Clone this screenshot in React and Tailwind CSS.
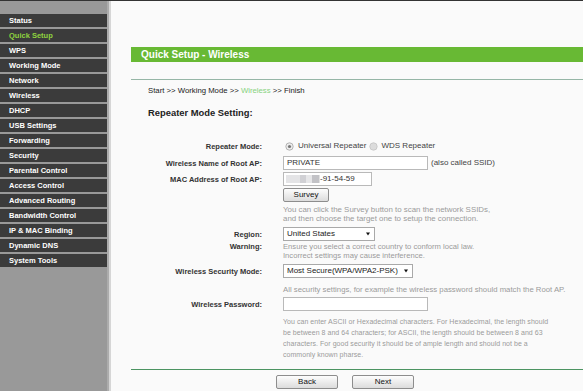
import React from "react";

const menu = [
  "Status",
  "Quick Setup",
  "WPS",
  "Working Mode",
  "Network",
  "Wireless",
  "DHCP",
  "USB Settings",
  "Forwarding",
  "Security",
  "Parental Control",
  "Access Control",
  "Advanced Routing",
  "Bandwidth Control",
  "IP & MAC Binding",
  "Dynamic DNS",
  "System Tools",
];

const Row = ({ label, children, className = "", top = false }) => (
  <div className={`flex ${top ? "items-start" : "items-center"} ${className}`}>
    <div className="w-[131px] shrink-0 text-right text-[7.5px] font-bold leading-[9px] text-[#333]">
      {label}
    </div>
    <div className="ml-[21px] flex items-center">{children}</div>
  </div>
);

const Radio = ({ checked }) => (
  <svg width="9" height="9" viewBox="0 0 9 9" className="shrink-0">
    <circle cx="4.5" cy="4.5" r="3.7" fill={checked ? "#ececec" : "#dcdcdc"} stroke={checked ? "#a5a5a5" : "#c4c4c4"} strokeWidth="0.8" />
    {checked && <circle cx="4.5" cy="4.5" r="1.6" fill="#777" />}
  </svg>
);

const Arrow = () => (
  <svg width="4" height="4" viewBox="0 0 4 4" className="shrink-0">
    <polygon points="0,0.5 4,0.5 2,3.5" fill="#111" />
  </svg>
);

const Button = ({ children, className = "" }) => (
  <div
    className={`flex h-[14px] items-center justify-center rounded-[2px] border border-[#8d8d8d] bg-gradient-to-b from-[#fdfdfd] to-[#dcdcdc] text-[8px] text-[#111] ${className}`}
  >
    {children}
  </div>
);

// grey hint text under the fields
const Help = ({ lines, className = "" }) => (
  <div className={`pl-[152px] text-[#9a9a9a] ${className}`}>
    {lines.map((l) => (
      <div key={l} className="whitespace-nowrap">
        {l}
      </div>
    ))}
  </div>
);

export default function App() {
  return (
    <div className="flex h-[391px] w-[583px] flex-col overflow-hidden font-['Liberation_Sans',Arial,sans-serif]">
      <div className="h-px shrink-0 bg-[#333]" />
      <div className="flex min-h-0 flex-1">
        <div className="flex w-[107px] shrink-0 flex-col gap-[2px] bg-[#999] pt-[13px]">
          {menu.map((item) => (
            <div
              key={item}
              className={`h-[13px] bg-[#3b3b3b] pl-[9px] text-[7.5px] font-bold leading-[13px] ${
                item === "Quick Setup" ? "text-[#8fd33f]" : "text-white"
              }`}
            >
              {item}
            </div>
          ))}
        </div>
        <div className="w-[2px] shrink-0 bg-[#acacac]" />
        <div className="w-[2px] shrink-0 bg-[#d6d6d6]" />

        <div className="flex-1 bg-[#fafafa] pl-[20px] pt-[46px]">
          <div className="h-[15px] bg-[#68b934] pl-[10px] text-[10px] font-bold leading-[15px] text-white">
            Quick Setup - Wireless
          </div>
          <div className="mt-[17px] h-px bg-[#96b6a6]" />

          <div className="mt-[6px] pl-[17px] text-[7.75px] leading-[10px] text-[#222]">
            Start &gt;&gt; Working Mode &gt;&gt; <span className="text-[#86d27e]">Wireless</span> &gt;&gt; Finish
          </div>
          <div className="mt-[11px] pl-[17px] text-[9.4px] font-bold leading-[12px] text-[#222]">
            Repeater Mode Setting:
          </div>

          <Row label="Repeater Mode:" className="mt-[20px] h-[14px]">
            <div className="flex items-center pl-[2px] text-[8px] text-[#444]">
              <Radio checked />
              <span className="ml-[4px]">Universal Repeater</span>
              <span className="ml-[3px]">
                <Radio />
              </span>
              <span className="ml-[3px]">WDS Repeater</span>
            </div>
          </Row>

          <Row label="Wireless Name of Root AP:" className="mt-[3px]">
            <div className="flex h-[14px] w-[145px] items-center border border-[#b9b9b9] bg-white pl-[3px] text-[8px] text-[#333]">
              PRIVATE
            </div>
            <span className="ml-[3px] text-[8px] text-[#444]">(also called SSID)</span>
          </Row>

          <Row label="MAC Address of Root AP:" className="mt-[2px]">
            <div className="flex h-[14px] w-[89px] items-center border border-[#b9b9b9] bg-white pl-[2px] text-[8px] text-[#333]">
              <div className="flex h-[8px] blur-[0.6px]">
                <div className="w-[14px] bg-[#e4e4e6]" />
                <div className="w-[6px] bg-[#d0d0d4]" />
                <div className="w-[6px] bg-[#e6e6e8]" />
                <div className="w-[7px] bg-[#c2c2c6]" />
                <div className="w-[1px] bg-[#e0e0e0]" />
              </div>
              <span>-91-54-59</span>
            </div>
          </Row>

          <Row label="" className="mt-[2px]">
            <Button className="w-[46px]">Survey</Button>
          </Row>

          <Help
            className="mt-[3px] text-[7.9px] leading-[9px]"
            lines={[
              "You can click the Survey button to scan the network SSIDs,",
              "and then choose the target one to setup the connection.",
            ]}
          />

          <Row label="Region:" className="mt-[4px]">
            <div className="flex h-[14px] w-[92px] items-center justify-between border border-[#a9a9a9] bg-white pl-[3px] pr-[4px] text-[8px] text-[#222]">
              <span>United States</span>
              <Arrow />
            </div>
          </Row>

          <Row label="Warning:" top className="mt-[1px]">
            <div className="text-[7.65px] leading-[9px] text-[#9a9a9a]">
              <div className="whitespace-nowrap">Ensure you select a correct country to conform local law.</div>
              <div className="whitespace-nowrap">Incorrect settings may cause interference.</div>
            </div>
          </Row>

          <Row label="Wireless Security Mode:" className="mt-[4px]">
            <div className="flex h-[14px] w-[130px] items-center justify-between border border-[#a9a9a9] bg-white pl-[3px] pr-[4px] text-[8px] text-[#222]">
              <span className="whitespace-nowrap">Most Secure(WPA/WPA2-PSK)</span>
              <Arrow />
            </div>
          </Row>

          <Help
            className="mt-[7px] text-[7.75px] leading-[9px]"
            lines={["All security settings, for example the wireless password should match the Root AP."]}
          />

          <Row label="Wireless Password:" className="mt-[3px]">
            <div className="h-[14px] w-[145px] border border-[#b9b9b9] bg-white" />
          </Row>

          <Help
            className="mt-[5px] text-[7px] leading-[11px] tracking-[0.04px]"
            lines={[
              "You can enter ASCII or Hexadecimal characters. For Hexadecimal, the length should",
              "be between 8 and 64 characters; for ASCII, the length should be between 8 and 63",
              "characters. For good security it should be of ample length and should not be a",
              "commonly known pharse.",
            ]}
          />

          <div className="mt-[9px] h-px bg-[#4c9462]" />

          <div className="mt-[5px] flex gap-[14px] pl-[145px]">
            <Button className="w-[62px]">Back</Button>
            <Button className="w-[62px]">Next</Button>
          </div>
        </div>
      </div>
    </div>
  );
}
